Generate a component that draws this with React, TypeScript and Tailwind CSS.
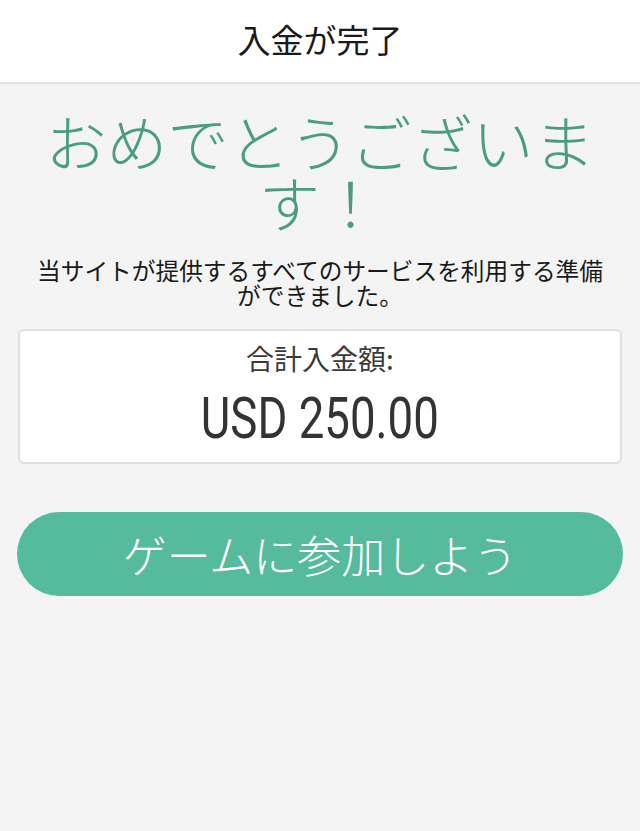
export default function App() {
  const jp = { fontFamily: '"Noto Sans CJK JP", "Noto Sans", sans-serif' }

  return (
    <div className="min-h-[831px] bg-[#f4f4f4]" style={jp}>
      {/* header */}
      <header className="h-[84px] bg-white border-b-2 border-[#e2e2e2] flex items-center justify-center">
        <h1 className="text-[33px] text-[#1a1a1a] leading-none pb-1">入金が完了</h1>
      </header>

      <main className="px-[17px]">
        <h2 className="mt-[26px] text-center text-[61px] leading-[61px] font-light text-[#4a9d83]">
          おめでとうございます！
        </h2>
        <p className="mt-[26px] text-center text-[23.7px] leading-[25px] text-[#1a1a1a] px-3">
          当サイトが提供するすべてのサービスを利用する準備ができました。
        </p>

        {/* total */}
        <div className="mt-[21px] mx-px bg-white border-2 border-[#e0e0e0] rounded-md h-[135px] flex flex-col items-center pt-[11px]">
          <div className="text-[28px] leading-[32px] text-[#3a3a3a]">合計入金額:</div>
          <div
            className="mt-[17px] text-[57px] leading-[56px] text-[#333] inline-block scale-x-[0.8]"
            style={{ fontFamily: 'Roboto, "Liberation Sans", sans-serif' }}
          >
            USD 250.00
          </div>
        </div>

        <button className="mt-[48px] w-full h-[84px] rounded-full bg-[#56ba9d] text-white text-[44px] font-light flex items-center justify-center">
          ゲームに参加しよう
        </button>
      </main>
    </div>
  )
}
